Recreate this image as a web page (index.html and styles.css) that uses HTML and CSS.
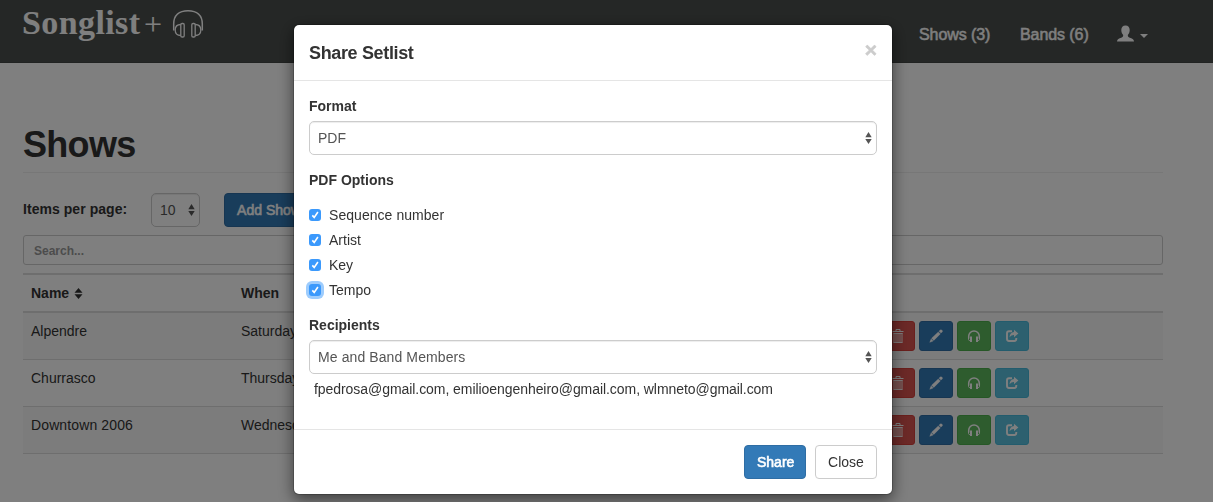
FILE: index.html
```html
<!DOCTYPE html>
<html lang="en">
<head>
<meta charset="utf-8">
<title>Songlist+</title>
<link rel="stylesheet" href="styles.css">
</head>
<body>
<svg class="defs" aria-hidden="true">
  <symbol id="trash" viewBox="0 0 14 14"><path d="M5 2V.5h4V2M1.500 2.500h11" fill="none" stroke="currentColor"/><path d="M3.500 4v9.500M5.500 4v9.500M7.500 4v9.500M9.500 4v9.500M11.500 4v9.500M3 13.500h9M3 4.500h9" fill="none" stroke="currentColor" stroke-width=".9" transform="translate(-.5 0)"/></symbol>
  <symbol id="pencil" viewBox="0 0 14 14"><path d="M10 2.200 11.200 1q.8-.7 1.500 0l.5.5q.600.700 0 1.400L12 4.100zM9.300 2.900l2 2-6.500 6.500-2.200-2.200zM2.100 9.900l2.100 2.100L.8 13.300z" fill="currentColor" stroke="currentColor" stroke-width=".4"/></symbol>
  <symbol id="phones" viewBox="0 0 14 14"><path d="M1.700 9.500V7.200a5.300 5.300 0 0 1 10.600 0v2.300" fill="none" stroke="currentColor" stroke-width="1.500"/><path d="M3 7.500h2v5.500H3zM9 7.500h2v5.500H9z" fill="currentColor"/><path d="M1.500 8v2.500l1.200 1.500M12.500 8v2.500l-1.200 1.500" fill="none" stroke="currentColor"/></symbol>
  <symbol id="share" viewBox="0 0 14 14"><path d="M7 2.300H4Q2 2.300 2 4.500v5.300Q2 12 4 12h5.300q2 0 2-2.200V9" fill="none" stroke="currentColor" stroke-width="1.900"/><path d="M9 .700 13.400 4.500 9 8.300V6Q6.300 5.900 4.500 8.200 5 3.500 9 3z" fill="currentColor"/></symbol>
  <symbol id="updown" viewBox="0 0 7 12"><path d="M3.500 0 6.700 5.300H.3zM3.500 12 .3 6.900h6.400z" fill="currentColor"/></symbol>
  <symbol id="check" viewBox="0 0 12 12"><path d="m3.300 6.400 1.900 2L8.900 3" fill="none" stroke="#fff" stroke-width="1.600"/></symbol>
</svg>

<header class="navbar">
  <a class="brand"><span class="brand-name">Songlist</span><span class="brand-plus">+</span>
    <svg class="brand-icon" viewBox="0 0 32 30"><g fill="none" stroke="currentColor" stroke-width="1.300"><path d="M1.700 21.500V15C1.700 6.500 7 1.700 16 1.700S30.300 6.500 30.300 15v6.500" stroke-width="1.500"/><rect x="8.800" y="14.500" width="3.400" height="13.500" rx="1.300"/><rect x="19.800" y="14.500" width="3.400" height="13.500" rx="1.300"/><path d="M8.800 15.500Q3.200 15.500 3.200 21T8.800 26.500M23.200 15.500Q28.800 15.500 28.800 21T23.200 26.500"/></g></svg>
  </a>
  <nav class="links">
    <a class="link shows">Shows (3)</a>
    <a class="link bands">Bands (6)</a>
    <a class="user"><svg class="user-icon" viewBox="0 0 17 17"><path d="M8.500.500c2.700 0 4.200 1.900 4.200 4.600 0 2-.8 4-1.900 5 0 1.500.5 2 2 2.700 2 .8 4.200 1.500 4.200 3.700H0c0-2.200 2.200-2.900 4.200-3.700 1.500-.7 2-1.200 2-2.700-1.100-1-1.900-3-1.900-5C4.300 2.400 5.800.500 8.500.500z" fill="currentColor"/></svg><span class="caret"></span></a>
  </nav>
</header>

<main class="page">
  <h1 class="title">Shows</h1>
  <div class="controls">
    <label class="per-page">Items per page:</label>
    <div class="select small"><span>10</span><svg class="arrows"><use href="#updown"/></svg></div>
    <button class="btn primary add">Add Show</button>
  </div>
  <div class="search">Search...</div>
  <div class="table">
    <div class="row head"><span class="name">Name <svg class="sort" viewBox="0 0 8 11"><path d="M4 0 8 4.700H0zM4 11 0 6.300h8z" fill="currentColor"/></svg></span><span class="when">When</span></div>
    <div class="row odd"><span class="name">Alpendre</span><span class="when">Saturday</span>
      <div class="actions"><i class="act red"><svg><use href="#trash"/></svg></i><i class="act blue"><svg><use href="#pencil"/></svg></i><i class="act green"><svg><use href="#phones"/></svg></i><i class="act cyan"><svg><use href="#share"/></svg></i></div></div>
    <div class="row"><span class="name">Churrasco</span><span class="when">Thursday</span>
      <div class="actions"><i class="act red"><svg><use href="#trash"/></svg></i><i class="act blue"><svg><use href="#pencil"/></svg></i><i class="act green"><svg><use href="#phones"/></svg></i><i class="act cyan"><svg><use href="#share"/></svg></i></div></div>
    <div class="row odd"><span class="name wide">Downtown 2006</span><span class="when">Wednesday</span>
      <div class="actions"><i class="act red"><svg><use href="#trash"/></svg></i><i class="act blue"><svg><use href="#pencil"/></svg></i><i class="act green"><svg><use href="#phones"/></svg></i><i class="act cyan"><svg><use href="#share"/></svg></i></div></div>
  </div>
</main>

<div class="backdrop">
  <section class="modal" role="dialog">
    <div class="modal-head"><h4 class="modal-title">Share Setlist</h4><span class="close">×</span></div>
    <div class="modal-body">
      <label class="label format">Format</label>
      <div class="select"><span>PDF</span><svg class="arrows"><use href="#updown"/></svg></div>
      <label class="label options">PDF Options</label>
      <div class="checks">
        <label class="check seq"><span class="box"><svg><use href="#check"/></svg></span>Sequence number</label>
        <label class="check"><span class="box"><svg><use href="#check"/></svg></span>Artist</label>
        <label class="check"><span class="box"><svg><use href="#check"/></svg></span>Key</label>
        <label class="check"><span class="box focus"><svg><use href="#check"/></svg></span>Tempo</label>
      </div>
      <label class="label recipients">Recipients</label>
      <div class="select"><span class="members">Me and Band Members</span><svg class="arrows"><use href="#updown"/></svg></div>
      <p class="emails">fpedrosa@gmail.com, emilioengenheiro@gmail.com, wlmneto@gmail.com</p>
    </div>
    <div class="modal-foot"><button class="btn primary">Share</button><button class="btn plain">Close</button></div>
  </section>
</div>
</body>
</html>
```

FILE: styles.css
```css
* { box-sizing: border-box; }
body {
  margin: 0;
  height: 502px;
  overflow: hidden;
  background: #fff;
  color: #333;
  font: 14px/20px "Liberation Sans", Arial, sans-serif;
}
svg { display: block; }
.defs { position: absolute; width: 0; height: 0; }

.navbar {
  display: flex;
  justify-content: space-between;
  height: 63px;
  padding: 0 65px 0 22px;
  background: #4b4f4d;
  border-bottom: 1px solid #434745;
  color: #fff;
}
.brand { display: flex; color: #fff; font-family: "Liberation Serif", serif; }
.brand-name { width: 120px; padding-top: 3px; font-size: 34px; line-height: 40px; font-weight: 700; letter-spacing: .4px; }
.brand-plus { margin-left: 2px; padding-top: 4px; font-size: 32px; line-height: 40px; }
.brand-icon { width: 32px; height: 30px; margin: 9px 0 0 10px; }
.links { display: flex; align-items: flex-start; padding-top: 25px; font-size: 16px; }
.link { letter-spacing: -.08px; -webkit-text-stroke: .5px #fff; white-space: nowrap; }
.shows { width: 101px; }
.bands { width: 97px; }
.user { display: flex; }
.user-icon { width: 17px; height: 17px; }
.caret { width: 8px; height: 4px; margin: 9px 0 0 6px; background: #fff; clip-path: polygon(0 0, 100% 0, 50% 100%); }

.page { width: 1140px; margin-left: 23px; }
.title {
  height: 110px;
  margin: 0 0 20px;
  padding-top: 62px;
  border-bottom: 1px solid #eee;
  font-size: 36px;
  line-height: 40px;
  font-weight: 700;
  letter-spacing: -.7px;
}
.controls { display: flex; height: 34px; }
.per-page { width: 128px; padding-top: 6px; font-weight: 700; letter-spacing: .05px; }
.select {
  display: flex;
  align-items: center;
  justify-content: space-between;
  height: 34px;
  padding: 0 4px 0 8px;
  border: 1px solid #ccc;
  border-radius: 5px;
  box-shadow: inset 0 1px 1px rgba(0, 0, 0, .075);
  background: #fff;
  color: #555;
}
.small { width: 49px; }
.members { letter-spacing: .1px; }
.arrows { width: 7px; height: 12px; }
.btn {
  height: 34px;
  padding: 0 12px;
  border: 1px solid #2e6da4;
  border-radius: 4px;
  background: #337ab7;
  color: #fff;
  font: 14px/20px "Liberation Sans", Arial, sans-serif;
  white-space: nowrap;
}
.primary { -webkit-text-stroke: .6px #fff; }
.plain { background: #fff; border-color: #ccc; color: #333; }
.add { width: 90px; margin-left: 24px; }
.search {
  height: 30px;
  margin: 8px 0;
  padding: 5px 10px;
  border: 1px solid #ccc;
  border-radius: 3px;
  color: #999;
  font-size: 12px;
  font-weight: 700;
}
.table { border-top: 2px solid #ddd; border-bottom: 1px solid #ddd; }
.row { display: flex; height: 47px; padding: 8px; border-top: 1px solid #ddd; }
.head { height: 38px; border-top: 0; border-bottom: 2px solid #ddd; font-weight: 700; }
.head + .row { height: 46px; border-top: 0; }
.odd { background: #f9f9f9; }
.name { display: flex; width: 210px; }
.wide { letter-spacing: .12px; }
.sort { width: 9px; height: 11px; margin: 5px 0 0 5px; }
.when { width: 640px; }
.actions { display: flex; gap: 4px; }
.act {
  display: grid;
  place-items: center;
  width: 34px;
  height: 30px;
  border: 1px solid;
  border-radius: 3px;
}
.act svg { width: 14px; height: 14px; color: #fff; }
.red { background: #d9534f; border-color: #d43f3a; }
.blue { background: #337ab7; border-color: #2e6da4; }
.green { background: #5cb85c; border-color: #4cae4c; }
.cyan { background: #5bc0de; border-color: #46b8da; }

.backdrop { position: fixed; inset: 0; padding: 24px 0 0 293px; background: rgba(0, 0, 0, .5); }
.modal {
  width: 600px;
  height: 471px;
  border: 1px solid rgba(0, 0, 0, .2);
  border-radius: 6px;
  background: #fff;
  background-clip: padding-box;
  box-shadow: 0 5px 15px rgba(0, 0, 0, .5);
}
.modal-head { display: flex; justify-content: space-between; height: 56px; padding: 15px; border-bottom: 1px solid #e5e5e5; }
.modal-title { margin: 0; padding-top: 1px; font-size: 18px; line-height: 25px; font-weight: 700; letter-spacing: -.35px; }
.close { color: #ccc; font-size: 21px; line-height: 20px; font-weight: 700; -webkit-text-stroke: .5px #ccc; }
.modal-body { height: 348px; padding: 15px; }
.label { display: block; height: 25px; font-weight: 700; }
.options { margin-top: 15px; }
.checks { display: grid; gap: 5px; margin: 10px 0 15px; }
.check { display: flex; align-items: center; height: 20px; }
.seq { letter-spacing: .05px; }
.box { width: 12px; height: 12px; margin-right: 8px; border-radius: 3px; background: #3b99fc; }
.box svg { width: 12px; height: 12px; }
.focus { box-shadow: 0 0 0 3px #9dccfd; }
.emails { margin: 5px 0 0 5px; letter-spacing: -.06px; white-space: nowrap; }
.modal-foot { display: flex; justify-content: flex-end; gap: 9px; padding: 15px; border-top: 1px solid #e5e5e5; }
.modal-foot .btn { width: 62px; }
```
